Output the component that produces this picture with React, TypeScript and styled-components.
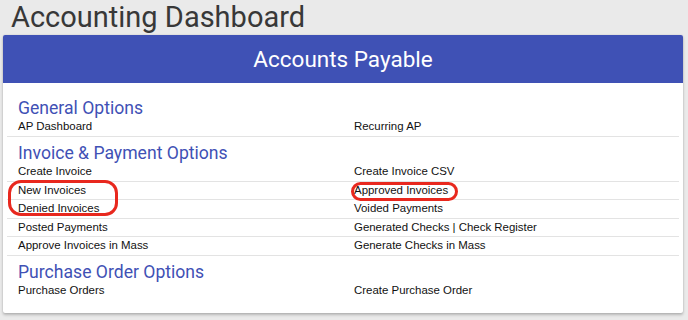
import React from "react"
import styled, { createGlobalStyle } from "styled-components"

const GlobalStyle = createGlobalStyle`
  html, body {
    margin: 0;
    padding: 0;
    background-color: #eaeaea;
  }
  body {
    font-family: "Liberation Sans", Arial, sans-serif;
  }
`

type Item = { left?: string; right?: string; mark?: "pair" | "single"; markRight?: boolean }
type Group = { title: string; rows: Item[] }

const groups: Group[] = [
  {
    title: "General Options",
    rows: [{ left: "AP Dashboard", right: "Recurring AP" }],
  },
  {
    title: "Invoice & Payment Options",
    rows: [
      { left: "Create Invoice", right: "Create Invoice CSV" },
      { left: "New Invoices", right: "Approved Invoices", mark: "pair", markRight: true },
      { left: "Denied Invoices", right: "Voided Payments" },
      { left: "Posted Payments", right: "Generated Checks | Check Register" },
      { left: "Approve Invoices in Mass", right: "Generate Checks in Mass" },
    ],
  },
  {
    title: "Purchase Order Options",
    rows: [{ left: "Purchase Orders", right: "Create Purchase Order" }],
  },
]

const App = () => {
  return (
    <Page>
      <GlobalStyle />
      <Title>Accounting Dashboard</Title>
      <Card>
        <CardHeader>Accounts Payable</CardHeader>
        <Body>
          {groups.map((g) => (
            <Section key={g.title}>
              <Heading>{g.title}</Heading>
              {g.rows.map((r, i) => (
                <Row key={i}>
                  <Cell>
                    {r.left}
                    {r.mark === "pair" ? <Ring $left={1} $top={-2} $w={110} $h={36} $r={13} /> : null}
                  </Cell>
                  <Cell>
                    {r.right}
                    {r.markRight ? <Ring $left={8} $top={0} $w={107} $h={19} $r={10} /> : null}
                  </Cell>
                </Row>
              ))}
            </Section>
          ))}
        </Body>
      </Card>
    </Page>
  )
}

export default App

const Page = styled.div`
  width: 688px;
  height: 320px;
  overflow: hidden;
  padding: 0 5px 0 3px;
  box-sizing: border-box;
`
const Title = styled.h1`
  margin: 0;
  padding-left: 8px;
  height: 35px;
  font-family: Roboto, "Liberation Sans", sans-serif;
  font-weight: 400;
  font-size: 29px;
  line-height: 35px;
  color: #383838;
`
const Card = styled.div`
  background-color: #ffffff;
  border-radius: 2px;
  box-shadow: 0 2px 3px rgba(0, 0, 0, 0.22), 0 0 2px rgba(0, 0, 0, 0.12);
  overflow: hidden;
  height: 278px;
`
const CardHeader = styled.div`
  height: 48px;
  background-color: #3f51b5;
  color: #ffffff;
  display: flex;
  align-items: center;
  justify-content: center;
  font-family: Roboto, "Liberation Sans", sans-serif;
  font-size: 22.5px;
  padding-bottom: 1px;
  box-sizing: border-box;
`
const Body = styled.div`
  padding: 9px 4px 0 4px;

  & > div:last-child > div:last-child {
    border-bottom: none;
  }
`
const Section = styled.div`
  padding-top: 5.7px;
`
const Heading = styled.div`
  padding-left: 11px;
  font-family: Roboto, "Liberation Sans", sans-serif;
  font-size: 17.6px;
  line-height: 20px;
  color: #3f51b5;
  padding-bottom: 0.8px;
`
const Row = styled.div`
  display: grid;
  grid-template-columns: 1fr 1fr;
  border-bottom: 1px solid #e3e3e3;
  height: 18.5px;
  box-sizing: border-box;
`
const Cell = styled.div`
  position: relative;
  padding: 1px 0 0 11px;
  font-size: 11.45px;
  line-height: 14px;
  color: #111111;
  white-space: nowrap;
`
const Ring = styled.span<{ $left: number; $top: number; $w: number; $h: number; $r: number }>`
  position: absolute;
  left: ${(p) => p.$left}px;
  top: ${(p) => p.$top}px;
  width: ${(p) => p.$w}px;
  height: ${(p) => p.$h}px;
  border: 3px solid #e8281e;
  border-radius: ${(p) => p.$r}px;
  box-sizing: border-box;
  pointer-events: none;
`
